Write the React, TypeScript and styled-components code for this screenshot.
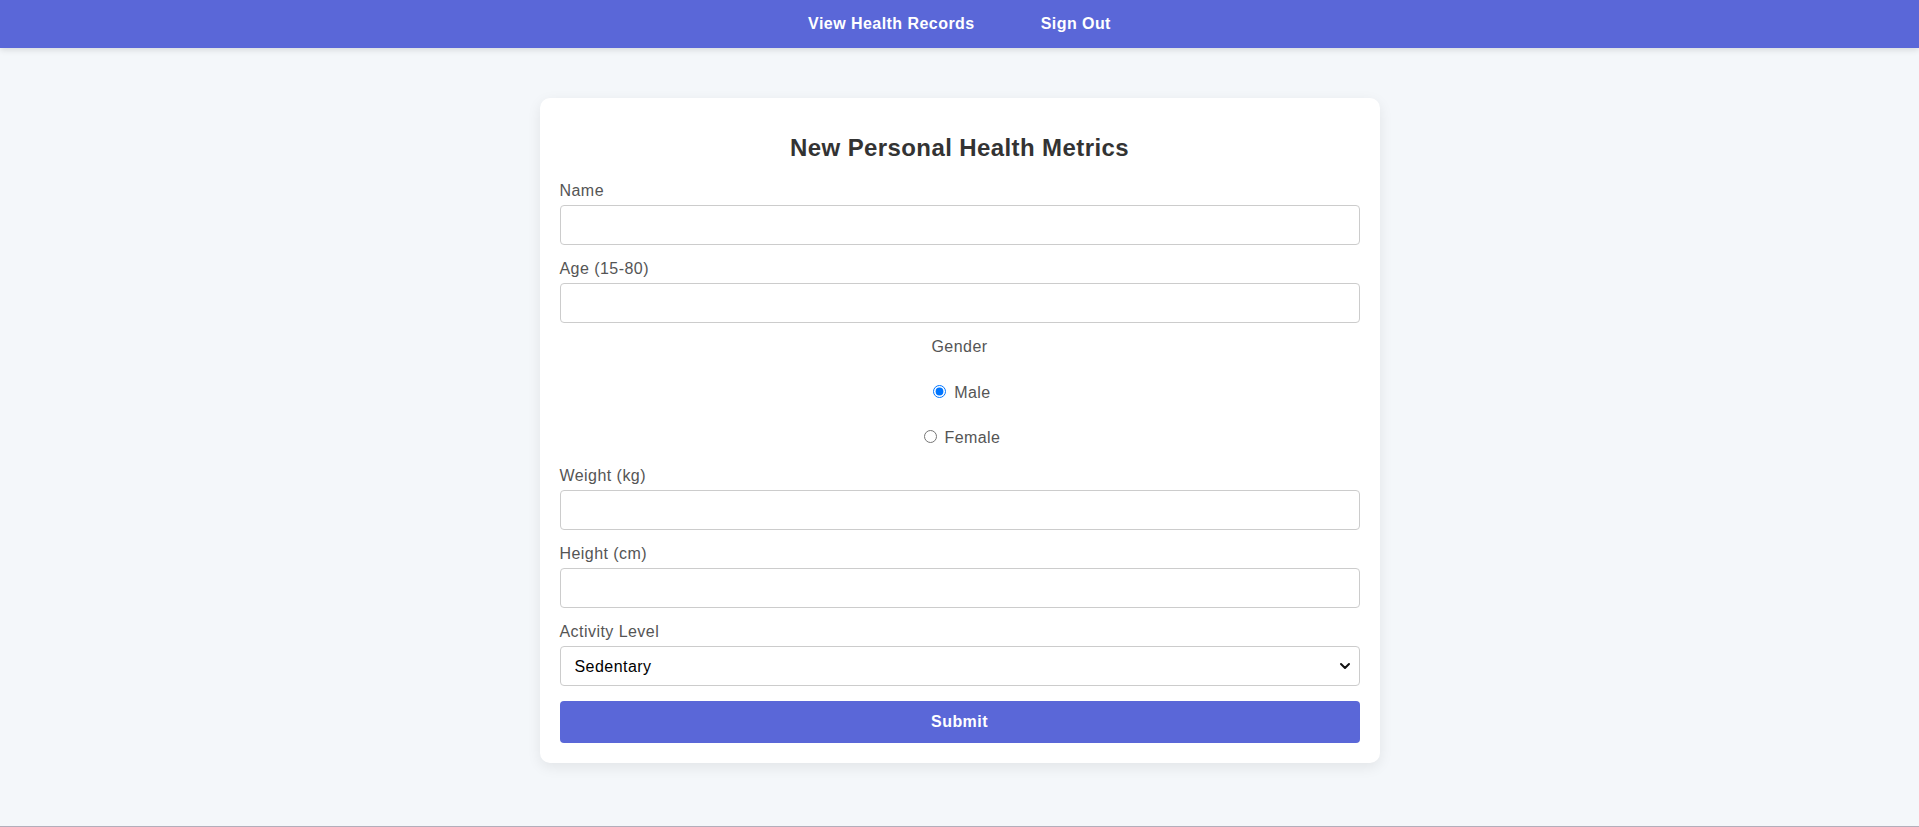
import React, {useState} from 'react'
import styled, {createGlobalStyle} from 'styled-components'
import {ChevronDown} from 'lucide-react'

const GlobalStyle = createGlobalStyle`
  * {
    box-sizing: border-box;
  }
  body {
    margin: 0;
    background-color: #f4f7fa;
    font-family: "Liberation Sans", Arial, sans-serif;
    letter-spacing: 0.45px;
  }
`

const Page = styled.div`
  min-height: 100vh;
  display: flex;
  flex-direction: column;
`

const NavBar = styled.nav`
  height: 48px;
  background-color: #5a67d8;
  display: flex;
  justify-content: center;
  align-items: center;
  gap: 66px;
  box-shadow: 0 2px 6px rgba(0, 0, 0, 0.12);
`

const NavLink = styled.a`
  color: #ffffff;
  font-weight: bold;
  font-size: 16px;
  text-decoration: none;
  cursor: pointer;
`

const Main = styled.main`
  flex: 1;
  display: flex;
  justify-content: center;
  padding-top: 50px;
`

const Card = styled.div`
  width: 840px;
  align-self: flex-start;
  background: #ffffff;
  border-radius: 10px;
  padding: 20px;
  box-shadow: 0 4px 14px rgba(0, 0, 0, 0.08);
`

const Title = styled.h2`
  margin: 16px 0 20px;
  text-align: center;
  font-size: 24px;
  letter-spacing: 0.4px;
  color: #333333;
`

const Label = styled.label`
  display: block;
  font-size: 16px;
  color: #555555;
  margin-bottom: 5px;
`

const Input = styled.input`
  display: block;
  width: 100%;
  padding: 10px;
  margin-bottom: 15px;
  font-size: 16px;
  font-family: inherit;
  border: 1px solid #cccccc;
  border-radius: 4px;
  outline: none;
`

const SelectWrap = styled.div`
  position: relative;
  margin-bottom: 15px;
`

const Select = styled.select`
  display: block;
  width: 100%;
  height: 40px;
  padding: 0 10px 0 14px;
  font-size: 16px;
  font-family: inherit;
  letter-spacing: 0.45px;
  border: 1px solid #cccccc;
  border-radius: 4px;
  background: #ffffff;
  color: #000000;
  appearance: none;
  -webkit-appearance: none;
`

const SelectArrow = styled.span`
  position: absolute;
  right: 7px;
  top: 50%;
  transform: translateY(-50%);
  display: flex;
  color: #111111;
  pointer-events: none;
`

const GenderGroup = styled.div`
  display: flex;
  flex-direction: column;
  align-items: center;
  gap: 25.5px;
  margin-bottom: 20px;
  color: #555555;
  font-size: 16px;
`

const RadioLabel = styled.label`
  color: #555555;
  cursor: pointer;
`

const SubmitButton = styled.button`
  display: block;
  width: 100%;
  padding: 12px;
  border: none;
  border-radius: 4px;
  background-color: #5a67d8;
  color: #ffffff;
  font-size: 16px;
  font-weight: bold;
  font-family: inherit;
  letter-spacing: 0.45px;
  cursor: pointer;
`

const Footer = styled.div`
  height: 1px;
  background-color: #b3aebb;
`

const App: React.FC = () => {
    const [gender, setGender] = useState<string>('male')
    const [activity, setActivity] = useState<string>('sedentary')

    return <>
        <GlobalStyle/>
        <Page>
            <NavBar>
                <NavLink>View Health Records</NavLink>
                <NavLink>Sign Out</NavLink>
            </NavBar>
            <Main>
                <Card>
                    <Title>New Personal Health Metrics</Title>
                    <form onSubmit={e => e.preventDefault()}>
                        <Label htmlFor="name">Name</Label>
                        <Input id="name" type="text"/>
                        <Label htmlFor="age">Age (15-80)</Label>
                        <Input id="age" type="number"/>
                        <GenderGroup>
                            <span>Gender</span>
                            <RadioLabel>
                                <input type="radio" name="gender" checked={gender === 'male'}
                                       onChange={() => setGender('male')}/> Male
                            </RadioLabel>
                            <RadioLabel>
                                <input type="radio" name="gender" checked={gender === 'female'}
                                       onChange={() => setGender('female')}/> Female
                            </RadioLabel>
                        </GenderGroup>
                        <Label htmlFor="weight">Weight (kg)</Label>
                        <Input id="weight" type="number"/>
                        <Label htmlFor="height">Height (cm)</Label>
                        <Input id="height" type="number"/>
                        <Label htmlFor="activity">Activity Level</Label>
                        <SelectWrap>
                            <Select id="activity" value={activity} onChange={e => setActivity(e.target.value)}>
                                <option value="sedentary">Sedentary</option>
                                <option value="light">Lightly Active</option>
                                <option value="moderate">Moderately Active</option>
                                <option value="very">Very Active</option>
                            </Select>
                            <SelectArrow>
                                <ChevronDown size={16} strokeWidth={3}/>
                            </SelectArrow>
                        </SelectWrap>
                        <SubmitButton type="submit">Submit</SubmitButton>
                    </form>
                </Card>
            </Main>
            <Footer/>
        </Page>
    </>
}

export default App
